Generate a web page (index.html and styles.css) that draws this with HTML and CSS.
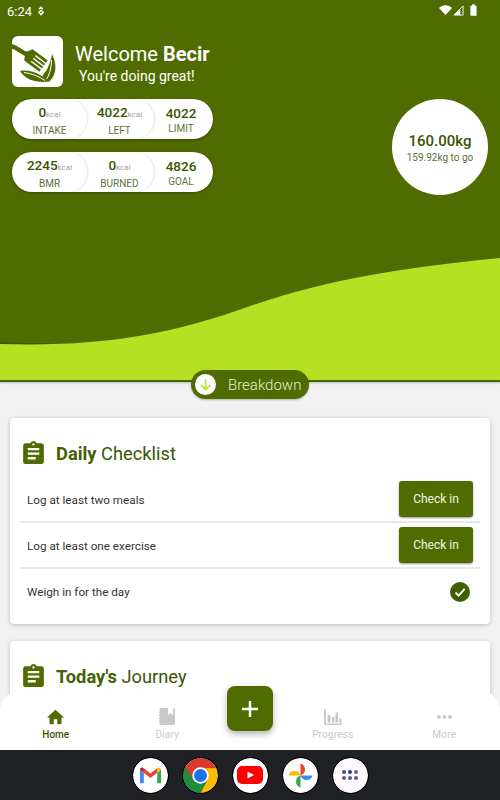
FILE: index.html
```html
<!DOCTYPE html>
<html lang="en">
<head>
<meta charset="utf-8">
<title>Home</title>
<link rel="stylesheet" href="styles.css">
</head>
<body>
<div class="screen">
  <header class="hero">
    <svg class="wave" viewBox="0 0 500 380" width="500" height="380" aria-hidden="true">
      <path class="wave-shade" d="M0 343C45 345 85 345 125 341"/>
      <path class="wave-fill" d="M0 344C100 347 170 335 250 306C330 279 400 268 500 258V380H0Z"/>
    </svg>
    <div class="status">
      <div class="status-left">
        <span class="clock">6:24</span>
        <svg class="status-mini" viewBox="0 0 10 12" width="8" height="10"><path d="M5 0L8 3 6.500 4.500 5 3 3.500 4.500 2 3ZM5 4L9 7.500 5 12 1 7.500ZM5 6.200L3.500 7.500 5 9.200 6.500 7.500Z"/></svg>
      </div>
      <div class="status-right">
        <svg viewBox="0 0 16 12" width="13" height="10"><path d="M0 3.500C4.500-1 11.500-1 16 3.500L8 12Z"/></svg>
        <svg class="signal" viewBox="0 0 12 12" width="11" height="11"><path class="tri" d="M11 1V11H1Z"/><path d="M8 4.500V11H1.500Z"/></svg>
        <svg viewBox="0 0 8 13" width="7" height="12"><path d="M2.500 0H5.500V1.500H7.500V13H.5V1.500H2.500Z"/></svg>
      </div>
    </div>
    <div class="hero-body">
      <div class="hero-left">
        <div class="welcome">
          <svg class="logo" viewBox="0 0 51 51" width="51" height="51" aria-hidden="true">
            <rect width="51" height="51" rx="6" fill="#fff"/>
            <path class="ink" d="M0 8L4 9.500 13 15 15.500 15.500 20.600 13.200 35.800 24.600 27.400 35.800 12.200 24.400 12.800 20 2 13.500 0 13Z"/>
            <path class="slit" d="M19.100 25.200L30.300 33.600M21.200 22.400L32.400 30.800M23.300 19.600L34.500 28"/>
            <path class="ink leaf" d="M40 17C45 27 46 37 38 45.500 32 45.500 29.500 43 31 38 35 35 38 26 40 17Z"/>
            <path class="midrib" d="M39.500 24C39.500 32 37.500 39 34 44"/>
            <path class="ink" d="M8 35C18 33 28 38 38 45.500 26 47 14 45 8 35Z"/>
            <path class="midrib" d="M12 36.500C20 37.500 27 40.500 33 44.500"/>
          </svg>
          <div class="welcome-text">
            <div class="welcome-title">Welcome <b>Becir</b></div>
            <div class="welcome-sub">You're doing great!</div>
          </div>
        </div>
        <div class="pill">
          <div class="seg seg-a"><div class="num">0<small>kcal</small></div><div class="lab">INTAKE</div></div>
          <div class="seg seg-b"><div class="num">4022<small>kcal</small></div><div class="lab">LEFT</div></div>
          <div class="seg seg-c"><div class="num">4022</div><div class="lab">LIMIT</div></div>
        </div>
        <div class="pill">
          <div class="seg seg-a"><div class="num">2245<small>kcal</small></div><div class="lab">BMR</div></div>
          <div class="seg seg-b"><div class="num">0<small>kcal</small></div><div class="lab">BURNED</div></div>
          <div class="seg seg-c"><div class="num">4826</div><div class="lab">GOAL</div></div>
        </div>
      </div>
      <div class="weight">
        <div class="weight-num">160.00kg</div>
        <div class="weight-sub">159.92kg to go</div>
      </div>
    </div>
  </header>

  <main class="content">
    <div class="breakdown">
      <span class="breakdown-icon">
        <svg viewBox="0 0 16 16" width="15" height="15"><path d="M8 2V13M3 8.500L8 13.500 13 8.500"/></svg>
      </span>
      <span>Breakdown</span>
    </div>

    <section class="card">
      <h2 class="card-title">
        <svg class="clip" viewBox="3 1 18 20" width="21" height="23"><path d="M19 3h-4.180C14.400 1.840 13.300 1 12 1c-1.300 0-2.400.84-2.820 2H5c-1.100 0-2 .9-2 2v14c0 1.100.9 2 2 2h14c1.100 0 2-.9 2-2V5c0-1.100-.9-2-2-2zm-7 0c.55 0 1 .45 1 1s-.45 1-1 1-1-.45-1-1 .45-1 1-1zm2 14H7v-2h7v2zm3-4H7v-2h10v2zm0-4H7V7h10v2z"/></svg>
        <span><b>Daily</b> Checklist</span>
      </h2>
      <div class="row">
        <span class="row-text">Log at least two meals</span>
        <button class="check-btn">Check in</button>
      </div>
      <div class="row">
        <span class="row-text">Log at least one exercise</span>
        <button class="check-btn">Check in</button>
      </div>
      <div class="row row-last">
        <span class="row-text">Weigh in for the day</span>
        <svg class="done" viewBox="0 0 20 20" width="20" height="20"><circle cx="10" cy="10" r="10"/><path d="M5.500 10.500L8.700 13.700 14.700 6.800"/></svg>
      </div>
    </section>

    <section class="card">
      <h2 class="card-title">
        <svg class="clip" viewBox="3 1 18 20" width="21" height="23"><path d="M19 3h-4.180C14.400 1.840 13.300 1 12 1c-1.300 0-2.400.84-2.820 2H5c-1.100 0-2 .9-2 2v14c0 1.100.9 2 2 2h14c1.100 0 2-.9 2-2V5c0-1.100-.9-2-2-2zm-7 0c.55 0 1 .45 1 1s-.45 1-1 1-1-.45-1-1 .45-1 1-1zm2 14H7v-2h7v2zm3-4H7v-2h10v2zm0-4H7V7h10v2z"/></svg>
        <span><b>Today's</b> Journey</span>
      </h2>
    </section>
  </main>

  <div class="bottom">
    <nav class="nav">
      <div class="nav-item active">
        <svg viewBox="2 3 20 17" width="17" height="16"><path d="M10 20v-6h4v6h5v-8h3L12 3 2 12h3v8z"/></svg>
        <span>Home</span>
      </div>
      <div class="nav-item">
        <svg viewBox="0 0 16 17" width="16" height="17"><path d="M2 0H9V7L11.500 5 14 7V0C15 0 16 .8 16 2V15C16 16 15 17 14 17H2C1 17 .5 16.500.5 15.500V14H0V13H.5V11H0V10H.5V8H0V7H.5V5H0V4H.5V2C.5 .8 1 0 2 0Z"/></svg>
        <span>Diary</span>
      </div>
      <div class="fab-slot">
        <button class="fab" aria-label="Add"><svg viewBox="0 0 16 16" width="16" height="16"><path d="M8 0V16M0 8H16"/></svg></button>
      </div>
      <div class="nav-item">
        <svg viewBox="0 0 18 16" width="18" height="16"><path d="M0 0H2V14.500H18V16H0ZM3.500 6H6.500V13.500H3.500ZM8 8H10.500V13.500H8ZM11.500 3.500H14V13.500H11.500ZM15 9.500H17.500V13.500H15Z"/></svg>
        <span>Progress</span>
      </div>
      <div class="nav-item">
        <svg class="nav-dots" viewBox="0 0 15 16" width="15" height="16"><circle cx="2" cy="8" r="2"/><circle cx="7.500" cy="8" r="2"/><circle cx="13" cy="8" r="2"/></svg>
        <span>More</span>
      </div>
    </nav>
    <div class="dock">
      <span class="dock-app">
        <svg viewBox="0 0 24 24" width="23" height="23">
          <path fill="#4285f4" d="M1 20V6L5 9V20Z"/>
          <path fill="#34a853" d="M19 20V9L23 6V20Z"/>
          <path fill="#ea4335" d="M5 9V4.500L12 10 19 4.500V9L12 14.500Z"/>
          <path fill="#c5221f" d="M1 6C1 4 3.500 3 5 4.500V9Z"/>
          <path fill="#fbbc04" d="M19 4.500C20.500 3 23 4 23 6L19 9Z"/>
        </svg>
      </span>
      <span class="dock-app">
        <svg class="chrome" viewBox="0 0 34 34" width="35" height="35">
          <circle cx="17" cy="17" r="17" fill="#db3a2e"/>
          <path fill="#fbbc04" d="M17 10H32.500A17 17 0 0 1 17 34L24 21Z"/>
          <path fill="#1e8e3e" d="M2 8.500A17 17 0 0 0 17 34L24 21H10Z"/>
          <circle cx="17" cy="17" r="8" fill="#fff"/>
          <circle cx="17" cy="17" r="6.300" fill="#1a73e8"/>
        </svg>
      </span>
      <span class="dock-app">
        <svg viewBox="0 0 26 20" width="26" height="20">
          <rect y="1" width="26" height="18" rx="5" fill="#f00"/>
          <path fill="#fff" d="M10.500 6.500L17 10 10.500 13.500Z"/>
        </svg>
      </span>
      <span class="dock-app">
        <svg viewBox="0 0 24 24" width="25" height="25">
          <path fill="#ea4335" d="M12 0.500A6 6 0 0 1 12 12Z"/>
          <path fill="#4285f4" d="M23.500 12A6 6 0 0 1 12 12Z"/>
          <path fill="#34a853" d="M12 23.500A6 6 0 0 1 12 12Z"/>
          <path fill="#fbbc04" d="M.5 12A6 6 0 0 1 12 12Z"/>
        </svg>
      </span>
      <span class="dock-app dock-grid">
        <i class="d1"></i><i class="d2"></i><i class="d3"></i><i class="d4"></i><i class="d4"></i><i class="d4"></i>
      </span>
    </div>
  </div>
</div>
</body>
</html>
```
FILE: styles.css
```css
* { box-sizing: border-box; }
html, body { margin: 0; padding: 0; }
body { font-family: Roboto, "Liberation Sans", sans-serif; background: #f1f1f1; }
.screen { position: relative; width: 500px; height: 800px; overflow: hidden; background: #f1f1f1; }

.hero { position: relative; height: 382px; background: #506c00; border-bottom: 2px solid #4a6500; box-shadow: 0 1px 2px rgba(0,0,0,.25); }
.wave { position: absolute; left: 0; top: 0; }
.wave-fill { fill: #b8e023; }
.wave-shade { fill: none; stroke: #415800; stroke-width: 2; }

.status { position: relative; display: flex; justify-content: space-between; align-items: center; height: 24px; padding: 0 23px 4px 7px; color: #fff; }
.status-left { display: flex; align-items: center; gap: 5px; margin-top: 2px; }
.clock { font-size: 13px; }
.status svg { fill: #fff; display: block; }
.status-right { display: flex; align-items: center; gap: 1px; }
.status-right .tri { fill: none; stroke: #fff; stroke-width: 1; }
.signal { margin-right: 5px; }

.hero-body { position: relative; display: flex; justify-content: space-between; padding: 12px 12px 0; }
.hero-left { width: 201px; }
.welcome { display: flex; gap: 12px; align-items: center; margin-bottom: 12px; }
.logo { display: block; flex: none; }
.ink { fill: #506c00; }
.leaf { stroke: #fff; stroke-width: .8; }
.slit { fill: none; stroke: #fff; stroke-width: 1.400; }
.midrib { fill: none; stroke: #fff; stroke-width: 1; }
.welcome-text { padding-top: 4px; }
.welcome-title { font-size: 20px; line-height: 24px; color: #fff; }
.welcome-title b { font-weight: 700; }
.welcome-sub { font-size: 14px; line-height: 17px; color: #fff; margin: 2px 0 0 4px; }

.pill { display: flex; height: 40px; margin-bottom: 13px; border-radius: 20px; background: #fff; box-shadow: 0 1px 3px rgba(0,0,0,.35); overflow: hidden; text-align: center; }
.seg { display: flex; flex-direction: column; align-items: center; justify-content: center; height: 40px; padding-top: 2px; border-radius: 0 20px 20px 0; }
.seg-a { width: 75px; box-shadow: 1px 0 2px rgba(0,0,0,.12); position: relative; z-index: 2; }
.seg-b { width: 75px; margin-left: -8px; padding-left: 6px; box-shadow: 1px 0 2px rgba(0,0,0,.12); position: relative; z-index: 1; }
.seg-c { flex: 1; padding-right: 5px; }
.num { font-size: 13.500px; line-height: 16px; font-weight: 500; color: #3a5500; white-space: nowrap; }
.num small { font-size: 8px; font-weight: 400; color: #a0a0a0; }
.lab { font-size: 10px; line-height: 13px; margin-top: 1px; color: #5c7038; }

.weight { width: 96px; height: 96px; margin-top: 63px; padding-top: 2px; border-radius: 50%; background: #fff; display: flex; flex-direction: column; align-items: center; justify-content: center; }
.weight-num { font-size: 15px; line-height: 18px; font-weight: 500; color: #3a5500; }
.weight-sub { font-size: 10px; line-height: 13px; margin-top: 1px; color: #5c7038; }

.content { display: flex; flex-direction: column; align-items: center; }
.breakdown { position: relative; display: flex; align-items: center; gap: 12px; width: 118px; height: 29px; margin-top: -12px; margin-bottom: 19px; padding-left: 4px; border-radius: 15px; background: #506c00; color: #e3ecd0; font-size: 15px; font-weight: 300; box-shadow: 0 1px 2px rgba(0,0,0,.25); }
.breakdown-icon { display: flex; align-items: center; justify-content: center; width: 21px; height: 21px; border-radius: 50%; background: #fff; }
.breakdown-icon svg { fill: none; stroke: #b8e023; stroke-width: 1.700; }

.card { width: 480px; margin-bottom: 17px; padding: 0 10px; background: #fff; border-radius: 4px; box-shadow: 0 1px 4px rgba(0,0,0,.22); }
.card-title { display: flex; align-items: center; gap: 12px; height: 59px; padding: 11px 0 0 3px; margin: 0; font-size: 18.300px; font-weight: 400; color: #3a5500; }
.card-title b { font-weight: 700; color: #456000; }
.clip { fill: #506c00; flex: none; margin-bottom: 2px; }
.row { display: flex; align-items: center; justify-content: space-between; height: 46px; padding: 0 7px; border-bottom: 2px solid #e8e8e8; font-size: 11.700px; color: #333; }
.row-text { margin-top: 2px; }
.row-last { border-bottom: 0; height: 55px; padding-bottom: 9px; }
.row-last .row-text { margin-top: 0; }
.check-btn { width: 74px; height: 36px; padding: 0; border: 0; border-radius: 3px; background: #506c00; color: #f2f5e8; font: 400 12px Roboto, sans-serif; box-shadow: 0 1px 2px rgba(0,0,0,.4); }
.done { margin-right: 3px; }
.done circle { fill: #3f6000; }
.done path { fill: none; stroke: #fff; stroke-width: 1.800; }

.bottom { position: absolute; left: 0; right: 0; bottom: 0; }
.nav { display: flex; height: 59px; background: #fff; border-radius: 20px 20px 0 0; }
.nav-item { flex: 1; display: flex; flex-direction: column; align-items: center; justify-content: flex-end; gap: 4px; height: 59px; padding-bottom: 10px; font-size: 10px; font-weight: 400; letter-spacing: .2px; color: #c9c9c9; }
.nav-item svg { fill: #c9c9c9; display: block; }
.nav-item.active { color: #3a5500; font-weight: 500; letter-spacing: 0; }
.nav-item.active svg { fill: #506c00; }
.fab-slot { flex: none; width: 54px; display: flex; justify-content: center; }
.fab { width: 46px; height: 45px; margin-top: -5px; padding: 0; border: 0; border-radius: 8px; background: #506c00; display: flex; align-items: center; justify-content: center; box-shadow: 0 3px 6px rgba(0,0,0,.3); }
.fab svg { fill: none; stroke: #fff; stroke-width: 2.500; }

.dock { display: flex; justify-content: center; align-items: center; gap: 15px; height: 50px; background: #202124; }
.dock-app { width: 35px; height: 35px; border-radius: 50%; background: #fff; display: flex; align-items: center; justify-content: center; outline: 1px solid #000; overflow: hidden; }
.dock-grid { display: grid; grid-template-columns: repeat(3, 4px); gap: 2px 2px; justify-content: center; align-content: center; background: #fdf8fc; }
.dock-grid i { width: 4px; height: 4px; border-radius: 50%; }
.d1 { background: #3f4c8f; }
.d2 { background: #2a3d8f; }
.d3 { background: #7d5a88; }
.d4 { background: #5f5f78; }
```
